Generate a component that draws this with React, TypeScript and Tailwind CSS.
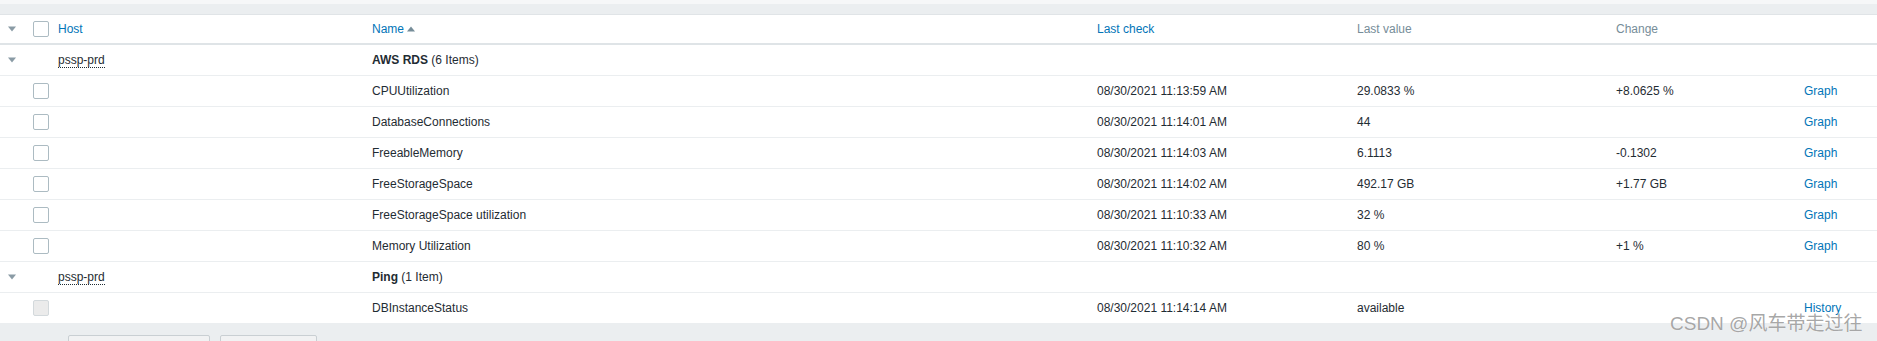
const cols = "grid grid-cols-[33px_25px_314px_725px_260px_259px_188px_1fr]";

type Item = {
  name: string;
  check: string;
  value: string;
  change?: string;
  link: string;
  disabled?: boolean;
};

const groups: { host: string; app: string; count: string; items: Item[] }[] = [
  {
    host: "pssp-prd",
    app: "AWS RDS",
    count: "(6 Items)",
    items: [
      { name: "CPUUtilization", check: "08/30/2021 11:13:59 AM", value: "29.0833 %", change: "+8.0625 %", link: "Graph" },
      { name: "DatabaseConnections", check: "08/30/2021 11:14:01 AM", value: "44", link: "Graph" },
      { name: "FreeableMemory", check: "08/30/2021 11:14:03 AM", value: "6.1113", change: "-0.1302", link: "Graph" },
      { name: "FreeStorageSpace", check: "08/30/2021 11:14:02 AM", value: "492.17 GB", change: "+1.77 GB", link: "Graph" },
      { name: "FreeStorageSpace utilization", check: "08/30/2021 11:10:33 AM", value: "32 %", link: "Graph" },
      { name: "Memory Utilization", check: "08/30/2021 11:10:32 AM", value: "80 %", change: "+1 %", link: "Graph" },
    ],
  },
  {
    host: "pssp-prd",
    app: "Ping",
    count: "(1 Item)",
    items: [
      { name: "DBInstanceStatus", check: "08/30/2021 11:14:14 AM", value: "available", link: "History", disabled: true },
    ],
  },
];

function Caret() {
  return (
    <svg width="8" height="6" viewBox="0 0 8 6" className="ml-[8px]">
      <path d="M0 0.5 L8 0.5 L4 5.5 Z" fill="#8a9ba5" />
    </svg>
  );
}

function Checkbox({ disabled }: { disabled?: boolean }) {
  return (
    <span
      className={
        disabled
          ? "block w-[16px] h-[16px] rounded-[2px] border border-[#d3d9dc] bg-[#ebebeb]"
          : "block w-[16px] h-[16px] rounded-[2px] border border-[#acbbc2] bg-white"
      }
    />
  );
}

export default function App() {
  return (
    <div className="w-[1877px] bg-white text-[12px] text-[#1f2c33] font-['Liberation_Sans',Arial,sans-serif] relative">
      {/* top band */}
      <div className="h-[4px] bg-[#f6f7f8]" />
      <div className="h-[11px] bg-[#ebeef0] border-b border-[#e0e4e7]" />

      {/* header */}
      <div className={`${cols} h-[30px] items-center border-b-2 border-[#dfe4e7]`}>
        <div className="flex items-center">
          <Caret />
        </div>
        <div>
          <Checkbox />
        </div>
        <div className="text-[#0275b8]">Host</div>
        <div className="flex items-center gap-[3px] text-[#0275b8]">
          Name
          <svg width="8" height="6" viewBox="0 0 8 6">
            <path d="M0 5.5 L8 5.5 L4 0.5 Z" fill="#768d99" />
          </svg>
        </div>
        <div className="text-[#0275b8]">Last check</div>
        <div className="text-[#768d99]">Last value</div>
        <div className="text-[#768d99]">Change</div>
        <div />
      </div>

      {groups.map((g, gi) => (
        <div key={gi}>
          <div className={`${cols} h-[31px] items-center border-b border-[#ebeef0]`}>
            <div className="flex items-center">
              <Caret />
            </div>
            <div />
            <div>
              <span className="border-b border-dotted border-[#1f2c33]">{g.host}</span>
            </div>
            <div>
              <span className="font-bold">{g.app}</span> {g.count}
            </div>
            <div />
            <div />
            <div />
            <div />
          </div>
          {g.items.map((it, ii) => (
            <div key={ii} className={`${cols} h-[31px] items-center border-b border-[#ebeef0]`}>
              <div />
              <div>
                <Checkbox disabled={it.disabled} />
              </div>
              <div />
              <div>{it.name}</div>
              <div>{it.check}</div>
              <div>{it.value}</div>
              <div>{it.change ?? ""}</div>
              <div className="text-[#0275b8]">{it.link}</div>
            </div>
          ))}
        </div>
      ))}

      {/* footer */}
      <div className="bg-[#ebeef0] h-[40px] pt-[11px] pl-[68px] flex gap-[10px]">
        <div className="w-[142px] h-[25px] rounded-[2px] border border-[#c9cfd3] bg-[#f1f2f3]" />
        <div className="w-[97px] h-[25px] rounded-[2px] border border-[#c9cfd3] bg-[#f1f2f3]" />
      </div>

      {/* watermark */}
      <div className="absolute left-[1670px] top-[310px] text-[19px] text-[#8f8f8f]/80 font-['Liberation_Sans','Noto_Sans_CJK_SC',sans-serif] [text-shadow:0_0_1px_#fff]">
        CSDN @风车带走过往
      </div>
    </div>
  );
}
